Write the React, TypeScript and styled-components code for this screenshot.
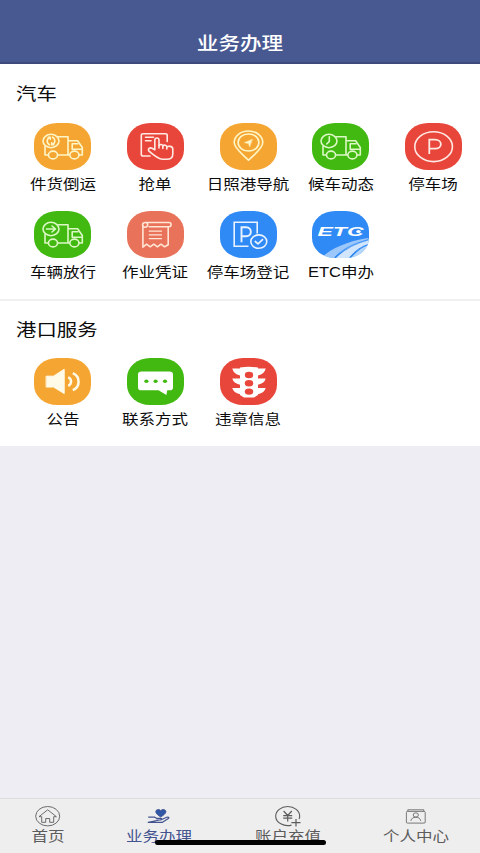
import React from "react";
import styled, { createGlobalStyle } from "styled-components";

const GlobalStyle = createGlobalStyle`
  * { box-sizing: border-box; }
  body { margin: 0; background: #eeedf3; }
`;

const Screen = styled.div`
  position: relative;
  width: 480px;
  height: 853px;
  display: flex;
  flex-direction: column;
  overflow: hidden;
  background: #eeedf3;
  font-family: "Noto Sans CJK SC", "Liberation Sans", sans-serif;
  color: #0c0c0c;
`;

const Header = styled.header`
  height: 64px;
  flex: none;
  padding-top: 29px;
  display: flex;
  justify-content: center;
  background: #485891;
  border-bottom: 2px solid #3e4a7b;
`;

const Title = styled.h1`
  margin: 0;
  font-size: 18px;
  line-height: 26px;
  font-weight: 500;
  color: #fff;
  transform: scaleX(1.2);
`;

const Section = styled.section<{ $height: number }>`
  height: ${(p) => p.$height}px;
  flex: none;
  padding-left: 16.3px;
  background: #fff;

  & + & {
    border-top: 2px solid #f0f0f0;
  }
`;

const Heading = styled.h2<{ $top: number }>`
  margin: 0;
  padding-top: ${(p) => p.$top}px;
  font-size: 17px;
  line-height: 24px;
  font-weight: 400;
  transform: scaleX(1.2);
  transform-origin: left;
`;

const Grid = styled.div<{ $top: number }>`
  margin-top: ${(p) => p.$top}px;
  display: grid;
  grid-template-columns: repeat(5, 92.7px);
  grid-auto-rows: 88px;
`;

const Item = styled.div`
  display: flex;
  flex-direction: column;
  align-items: center;
`;

const Tile = styled.div<{ $color: string }>`
  width: 57px;
  height: 47px;
  overflow: hidden;
  border-radius: 23px / 20px;
  background: ${(p) => p.$color};

  svg {
    display: block;
  }
`;

const Label = styled.span`
  margin-top: 4px;
  font-family: "Liberation Sans", "Noto Sans CJK SC", sans-serif;
  font-size: 14px;
  line-height: 20px;
  white-space: nowrap;
  transform: scaleX(1.18);
`;

const TabBar = styled.nav`
  height: 55px;
  flex: none;
  margin-top: auto;
  padding: 6px 31px 0;
  display: flex;
  justify-content: space-between;
  background: #efeeef;
  border-top: 1px solid #dcdcde;
`;

const Tab = styled.div<{ $width: number; $active?: boolean }>`
  width: ${(p) => p.$width}px;
  display: flex;
  flex-direction: column;
  align-items: center;
  color: ${(p) => (p.$active ? "#42538f" : "#5c5c5c")};

  svg {
    display: block;
    overflow: visible;
  }
`;

const TabLabel = styled.span`
  margin-top: -2px;
  font-size: 14px;
  line-height: 20px;
  font-weight: 400;
  white-space: nowrap;
  transform: scaleX(1.18);
`;

const HomeIndicator = styled.div`
  position: absolute;
  left: 155px;
  bottom: 8px;
  width: 171px;
  height: 5px;
  border-radius: 3px;
  background: #000;
`;

const Glyph = ({ children, tint = "#fff" }: { children: React.ReactNode; tint?: string }) => (
  <svg width="57" height="47" viewBox="0 0 57 47" fill="none" stroke={tint} strokeWidth="1.6" strokeLinecap="round" strokeLinejoin="round">
    {children}
  </svg>
);

const Truck = ({ tint, children }: { tint: string; children: React.ReactNode }) => (
  <Glyph tint={tint}>
    <ellipse cx="17" cy="18" rx="8" ry="6.7" />
    <path d="M24 13.8H34V32M11 23.5V32H14.5M23.5 32H35.5M34 17.7H43.6L48.3 24.5V32H45" />
    <path d="M44 20.8H38.2V26.2H47.8" />
    <ellipse cx="19" cy="32" rx="4.6" ry="3.9" />
    <ellipse cx="40.4" cy="32" rx="4.6" ry="3.9" />
    {children}
  </Glyph>
);

const TransferIcon = () => (
  <Truck tint="#fff6c8">
    <path d="M15.5 21.8C12 19.5 12.6 15.5 16.3 14.2M14.2 14.2H16.3V16.3M18.5 14.2C22 16.5 21.4 20.5 17.7 21.8M19.8 21.8H17.7V19.7" />
  </Truck>
);

const WaitingIcon = () => (
  <Truck tint="#dcf8c5">
    <path d="M17.3 13.8V18.5L14.7 21" />
  </Truck>
);

const ReleaseIcon = () => (
  <Truck tint="#dcf8c5">
    <path d="M12.5 18H21.5M18 15L21.5 18L18 21" />
  </Truck>
);

const GrabIcon = () => (
  <Glyph tint="#ffe9e2">
    <path d="M23 33H16.2Q14.3 33 14.3 31.4V12.2Q14.3 10.7 16.2 10.7H38.3Q40.2 10.7 40.2 12.2V18.5M18.5 14.2H26.5M18.5 17.8H24" />
    <path d="M27.8 26.8V17.2C27.8 14.3 32 14.3 32 17.2V22.5C33 20.9 35.6 21.3 35.8 23C37 21.5 39.6 22 39.8 23.8C41.5 22.7 45.8 23 45.8 26V31C45.8 34.7 43 36.3 39.7 36.3H35.5C31.5 36.3 27 32.6 22 28.2C20.4 25.8 23 24.2 25 25.2Z" />
    <path d="M32 22.5V25M35.8 23V25.5M39.8 23.8V26" />
  </Glyph>
);

const NavigationIcon = () => (
  <Glyph tint="#fff6c8">
    <path d="M28.5 37.2C23.5 32 14.2 25.7 14.2 19.6C14.2 13 20.5 8 28.5 8S42.8 13 42.8 19.6C42.8 25.7 33.5 32 28.5 37.2Z" />
    <ellipse cx="28.5" cy="19.5" rx="10.4" ry="8.5" />
    <path d="M32.3 16.3L24.3 19.7L28.4 20.6L29.7 23.8Z" fill="#fff6c8" strokeWidth=".4" />
  </Glyph>
);

const ParkingIcon = () => (
  <Glyph tint="#ffe9e2">
    <ellipse cx="28.6" cy="23.7" rx="18.8" ry="14.9" />
    <path d="M24.3 31V16.7H30C37.8 16.7 37.8 25.6 30 25.6H24.3" strokeLinecap="butt" strokeLinejoin="miter" strokeWidth="1.8" />
  </Glyph>
);

const VoucherIcon = () => (
  <Glyph tint="#ffe6d5">
    <path d="M22.3 15.7H42C44.8 15.7 44.8 11.5 42 11.5H18.3C14.7 11.5 14.7 16.2 17.8 16.2C20.6 16.2 22 13.5 19.3 11.7" />
    <path d="M15.9 14.8V36.2L19.6 33.2L23.2 35.8L26.8 33.2L30.4 35.8L34 33.2L37.6 35.8L41.2 33.8V16" />
    <path d="M22.3 20.2H34.5M22.3 23.9H34.5M22.3 27.6H34.5" strokeWidth="1.3" />
  </Glyph>
);

const RegisterIcon = () => (
  <Glyph tint="#e8f3ff">
    <path d="M28.5 35.2H14.2V11.2H37.2V22.5" strokeLinecap="butt" strokeLinejoin="miter" />
    <path d="M21.5 31.3V16.2H26.2C32.4 16.2 32.4 25.2 26.2 25.2H21.5" strokeLinecap="butt" strokeLinejoin="miter" strokeWidth="1.9" />
    <ellipse cx="38.8" cy="30.6" rx="8" ry="6.7" />
    <path d="M35.3 30.5L38 32.9L42.5 28.6" strokeWidth="1.7" />
  </Glyph>
);

const EtcIcon = () => (
  <svg width="57" height="47" viewBox="0 0 57 47">
    <path d="M9 47C18 39 31 31 56 27L57 29C42 34 30 39 22 47Z" fill="#fff" opacity=".52" />
    <path d="M24 47C32 39 43 33 57 29.2V33C49 36 42 41 37 47Z" fill="#fff" opacity=".78" />
    <path d="M39 47C44 41 50 36 57 34V37C52 39 48 43 46 47Z" fill="#fff" opacity=".65" />
    <path d="M23 46C31 38 41 33 56 28.7M38 46C43 40 49 35.5 57 33.2" stroke="#308af5" strokeWidth=".9" fill="none" />
    <text x="5.5" y="24.8" textLength="46" lengthAdjust="spacingAndGlyphs" fill="#fff" fontFamily="Liberation Sans, sans-serif" fontSize="12.5" fontWeight="700" fontStyle="italic">ETC</text>
    <ellipse cx="46.5" cy="20.4" rx="2.2" ry="1.5" fill="#fff" />
  </svg>
);

const NoticeIcon = () => (
  <Glyph>
    <path d="M12.5 18.2H19.5L30.2 11.3V35.5L19.5 29H12.5Z" fill="#fffbe8" stroke="#fffbe8" strokeWidth="1" />
    <path d="M34.2 19.3C38 20.7 38 26.2 34.2 27.8M38.8 15.1C46.5 18.4 46.5 28.9 38.8 32.1" stroke="#fffbe8" strokeWidth="2.5" strokeLinecap="butt" />
  </Glyph>
);

const ContactIcon = () => (
  <Glyph>
    <path d="M14.5 13.6H42.5Q46 13.6 46 16.6V29.4Q46 32.3 42.5 32.3H40.3L39.4 37L31.5 32.3H14.5Q11 32.3 11 29.4V16.6Q11 13.6 14.5 13.6Z" fill="#fff" stroke="none" />
    <g fill="#41b910" stroke="none">
      <ellipse cx="19.4" cy="23.3" rx="2.1" ry="1.8" />
      <ellipse cx="28.6" cy="23.3" rx="2.1" ry="1.8" />
      <ellipse cx="38" cy="23.3" rx="2.1" ry="1.8" />
    </g>
  </Glyph>
);

const ViolationIcon = () => (
  <Glyph>
    <g fill="#fff" stroke="none">
      <path d="M20 9.5Q28.5 7.8 38 9.5V37L34 39.5H24L20 37Z" />
      <path d="M20 10.5H12.3Q13.5 16 20 17.5ZM38 10.5H45.7Q44.5 16 38 17.5ZM20 20.5H12.3Q13.5 25.3 20 26.8ZM38 20.5H45.7Q44.5 25.3 38 26.8ZM20 30H12.3Q13.5 34.8 20 36.3ZM38 30H45.7Q44.5 34.8 38 36.3Z" />
    </g>
    <g fill="#e9463b" stroke="none">
      <ellipse cx="29" cy="17" rx="4.2" ry="3.2" />
      <ellipse cx="29" cy="25.3" rx="4.2" ry="3.2" />
      <ellipse cx="29" cy="33.6" rx="4.2" ry="3.2" />
    </g>
  </Glyph>
);

type Service = { label: string; color: string; icon: React.ReactNode };

const vehicle: Service[] = [
  { label: "件货倒运", color: "#f5a632", icon: <TransferIcon /> },
  { label: "抢单", color: "#e9463b", icon: <GrabIcon /> },
  { label: "日照港导航", color: "#f5a632", icon: <NavigationIcon /> },
  { label: "候车动态", color: "#41b910", icon: <WaitingIcon /> },
  { label: "停车场", color: "#e9463b", icon: <ParkingIcon /> },
  { label: "车辆放行", color: "#41b910", icon: <ReleaseIcon /> },
  { label: "作业凭证", color: "#e9735a", icon: <VoucherIcon /> },
  { label: "停车场登记", color: "#308af5", icon: <RegisterIcon /> },
  { label: "ETC申办", color: "#308af5", icon: <EtcIcon /> },
];

const port: Service[] = [
  { label: "公告", color: "#f5a632", icon: <NoticeIcon /> },
  { label: "联系方式", color: "#41b910", icon: <ContactIcon /> },
  { label: "违章信息", color: "#e9463b", icon: <ViolationIcon /> },
];

const ServiceGrid = ({ services, top }: { services: Service[]; top: number }) => (
  <Grid $top={top}>
    {services.map((s) => (
      <Item key={s.label}>
        <Tile $color={s.color}>{s.icon}</Tile>
        <Label>{s.label}</Label>
      </Item>
    ))}
  </Grid>
);

const TabGlyph = ({ children }: { children: React.ReactNode }) => (
  <svg width="26" height="22" viewBox="0 0 26 22" fill="none" stroke="currentColor" strokeWidth=".9" strokeLinejoin="round">
    {children}
  </svg>
);

const HomeIcon = () => (
  <TabGlyph>
    <ellipse cx="12.7" cy="11.2" rx="12" ry="9.7" />
    <path d="M4 11.7L12.7 4.8L21.4 11.7H18.7V17.3H14.7V13.5H10.7V17.3H6.7V11.7Z" />
  </TabGlyph>
);

const HandHeartIcon = () => (
  <TabGlyph>
    <path d="M14.7 12C12.2 10.2 9.8 8.7 9.8 6.8C9.8 4.2 13.3 3.7 14.7 5.7C16.1 3.7 19.9 4.2 19.9 6.8C19.9 8.7 17.2 10.2 14.7 12Z" fill="#3158a4" />
    <path d="M2.2 12.2H8.8L10.7 13.4H14.5C16.2 13.4 16.2 15 14.5 15H10.5M15.7 14.5L20.8 12.3C22.8 11.6 23.5 12.8 22 13.8L16.5 17.3H2.2Z" strokeWidth="1.2" />
  </TabGlyph>
);

const RechargeIcon = () => (
  <TabGlyph>
    <path d="M16.5 20.1C9 22.2 .7 17.6 .7 11.2C.7 5.8 6 1.5 12.7 1.5S24.7 5.8 24.7 11.2Q24.7 12.7 24 14" strokeWidth="1.1" />
    <path d="M8.6 6L12.7 10.5L16.8 6M8.2 10.7H17.2M8.2 13.2H17.2M12.7 10.5V16.5M16.4 17.6H25.5M21 13.9V21.4" strokeWidth="1.2" />
  </TabGlyph>
);

const ProfileIcon = () => (
  <TabGlyph>
    <g strokeWidth=".8">
      <rect x="3.4" y="6.4" width="18.8" height="11.7" rx="1" />
      <path d="M4.8 6.2V4.8H20.8V6.2" />
      <ellipse cx="12.8" cy="10" rx="2.6" ry="2.2" />
      <path d="M7.9 15.9C8.2 13.3 10.4 12.2 12.8 12.2S17.4 13.3 17.7 15.9" />
    </g>
  </TabGlyph>
);

export default function App() {
  return (
    <Screen>
      <GlobalStyle />
      <Header>
        <Title>业务办理</Title>
      </Header>
      <Section $height={235}>
        <Heading $top={17}>汽车</Heading>
        <ServiceGrid services={vehicle} top={18} />
      </Section>
      <Section $height={147}>
        <Heading $top={16}>港口服务</Heading>
        <ServiceGrid services={port} top={17} />
      </Section>
      <TabBar>
        <Tab $width={33}>
          <HomeIcon />
          <TabLabel>首页</TabLabel>
        </Tab>
        <Tab $width={66} $active>
          <HandHeartIcon />
          <TabLabel>业务办理</TabLabel>
        </Tab>
        <Tab $width={66}>
          <RechargeIcon />
          <TabLabel>账户充值</TabLabel>
        </Tab>
        <Tab $width={66}>
          <ProfileIcon />
          <TabLabel>个人中心</TabLabel>
        </Tab>
      </TabBar>
      <HomeIndicator />
    </Screen>
  );
}
